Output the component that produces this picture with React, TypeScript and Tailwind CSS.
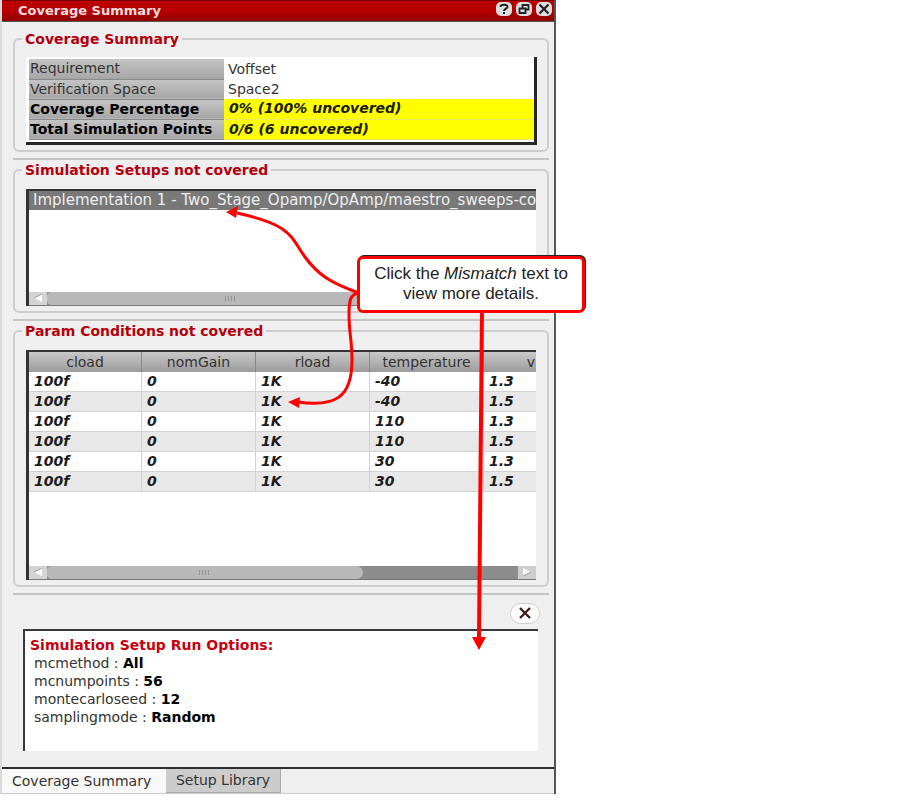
import type { ReactNode } from "react";

const summary = [
  { label: "Requirement", value: "Voffset", strong: false },
  { label: "Verification Space", value: "Space2", strong: false },
  { label: "Coverage Percentage", value: "0% (100% uncovered)", strong: true },
  { label: "Total Simulation Points", value: "0/6 (6 uncovered)", strong: true },
];

const columns = ["cload", "nomGain", "rload", "temperature", "v"];

const conditions = [
  ["100f", "0", "1K", "-40", "1.3"],
  ["100f", "0", "1K", "-40", "1.5"],
  ["100f", "0", "1K", "110", "1.3"],
  ["100f", "0", "1K", "110", "1.5"],
  ["100f", "0", "1K", "30", "1.3"],
  ["100f", "0", "1K", "30", "1.5"],
];

const runOptions = [
  ["mcmethod", "All"],
  ["mcnumpoints", "56"],
  ["montecarloseed", "12"],
  ["samplingmode", "Random"],
];

function Group({ title, children }: { title: string; children: ReactNode }) {
  return (
    <>
      <fieldset className="mr-[5px] ml-[11px] min-w-0 rounded-md border-2 border-[#cdcdcd] pr-[10px] pb-[5px] pl-[11px]">
        <legend className="-ml-[4px] h-4 px-[3px] text-[14px] leading-4 font-bold text-[#b3000c]">{title}</legend>
        {children}
      </fieldset>
      <hr className="mt-[6px] mr-[5px] mb-[2px] ml-[11px] border-t-2 border-[#c4c4c4]" />
    </>
  );
}

function Scrollbar({ thumb }: { thumb: string }) {
  return (
    <div className="flex h-[14px] border-b border-[#777] bg-[#8c8c8c]">
      <button aria-label="Scroll left" className="flex w-[18px] items-center justify-center bg-[#d4d4d4]">
        <svg width="8" height="8" viewBox="0 0 8 8"><path d="M8 0v8L0 4z" fill="#fff" /><path d="M8 0L0 4" stroke="#999" /></svg>
      </button>
      <div className="min-w-0 flex-1">
        <div className={`flex h-full items-center justify-center gap-px rounded-l-[5px] rounded-r-[7px] bg-[#b8b8b8] ${thumb}`}>
          {[0, 1, 2, 3].map((n) => <span key={n} className="mr-px h-[5px] w-px bg-[#929292]" />)}
        </div>
      </div>
      <button aria-label="Scroll right" className="flex w-[18px] items-center justify-center bg-[#cecece]">
        <svg width="8" height="8" viewBox="0 0 8 8"><path d="M0 0v8L8 4z" fill="#fff" /><path d="M0 8L8 4" stroke="#999" /></svg>
      </button>
    </div>
  );
}

function TitleButton({ label, children }: { label: string; children: ReactNode }) {
  return (
    <button aria-label={label} className="flex h-[14px] w-4 items-center justify-center rounded-[5px] bg-[#dedede]">
      <svg width="14" height="12" viewBox="0 0 14 12" fill="none" stroke="#222" strokeWidth="2">{children}</svg>
    </button>
  );
}

export default function App() {
  return (
    <div className="relative grid grid-cols-[556fr_354fr] bg-white font-['DejaVu_Sans','Open_Sans',sans-serif] text-[14px] text-[#333]">
      <main className="min-w-0 border-r-2 border-l-2 border-r-[#555] border-l-[#dadada] bg-[#efefef]">
        <header className="mb-[9px] flex h-[22px] items-start justify-between border-t border-b border-t-[#7a0000] border-b-[#555] bg-linear-to-b from-[#b80000] from-50% to-[#8e0000] pr-[2px] pl-4">
          <h1 className="text-[13px] leading-[19px] font-bold text-[#f5dede]">Coverage Summary</h1>
          <div className="flex gap-1 pt-px">
            <TitleButton label="Help"><path d="M3.500 4C3.500 1 10.500 1 10.500 3.800C10.500 6 7 5.500 7 8M7 9v2" /></TitleButton>
            <TitleButton label="Restore"><path d="M5.500 4.500V2h6v4.500H9M2.500 5.500h6V10h-6z" strokeWidth="1.800" /></TitleButton>
            <TitleButton label="Close"><path d="M2.500 1.500l9 9M11.500 1.500l-9 9" strokeWidth="2.200" /></TitleButton>
          </div>
        </header>

        <Group title="Coverage Summary">
          <div className="mt-[10px] border-r-[3px] border-b-[3px] border-[#26262a] bg-white pt-[2px] pb-[2px] pl-[3px]">
            <table className="w-full table-fixed border-collapse text-left">
              <colgroup><col className="w-[195px]" /><col /></colgroup>
              <tbody>
                {summary.map((row) => (
                  <tr key={row.label} className="h-5">
                    <th scope="row" className={`h-5 border-b border-[#888] bg-linear-to-b from-[#c4c4c4] to-[#a6a6a6] p-0 pl-px leading-[19px] whitespace-nowrap ${row.strong ? "font-bold text-black" : "font-normal"}`}>{row.label}</th>
                    <td className={`h-5 p-0 leading-[19px] ${row.strong ? "border-b border-[#e9e96a] bg-[#ff0] pl-[5px] font-bold text-[#1c1c00] italic" : "pl-1"}`}>{row.value}</td>
                  </tr>
                ))}
              </tbody>
            </table>
          </div>
        </Group>

        <Group title="Simulation Setups not covered">
          <div className="mt-[11px] mr-px flex h-[117px] flex-col justify-between border-t-2 border-l-[3px] border-[#333] bg-white">
            <button className="h-[19px] w-full overflow-hidden bg-[#787878] pl-1 text-left text-[15px] leading-[18px] whitespace-nowrap text-[#eee]">
              Implementation 1 - Two_Stage_Opamp/OpAmp/maestro_sweeps-co
            </button>
            <Scrollbar thumb="w-[78%]" />
          </div>
        </Group>

        <Group title="Param Conditions not covered">
          <div className="mt-[11px] mr-px flex h-[230px] flex-col justify-between border-t-2 border-l-[3px] border-[#333] bg-white">
            <table className="w-full table-fixed border-separate border-spacing-0 text-left">
              <colgroup>
                <col className="w-[113px]" /><col className="w-[114px]" /><col className="w-[114px]" /><col className="w-[114px]" /><col />
              </colgroup>
              <thead>
                <tr>
                  {columns.map((name) => (
                    <th key={name} scope="col" className="h-5 border-r border-[#888] bg-linear-to-b from-[#c8c8c8] to-[#9c9c9c] p-0 text-center leading-5 font-normal last:border-r-0 last:pr-px last:text-right">{name}</th>
                  ))}
                </tr>
              </thead>
              <tbody>
                {conditions.map((row, index) => (
                  <tr key={index} className="even:bg-[#e8e8e8]">
                    {row.map((cell, i) => (
                      <td key={i} className="h-5 border-r border-b border-[#d2d2d2] p-0 pl-[5px] leading-[19px] font-bold text-[#1c1c1c] italic last:border-r-0">{cell}</td>
                    ))}
                  </tr>
                ))}
              </tbody>
            </table>
            <Scrollbar thumb="w-[67%]" />
          </div>
        </Group>

        <section className="mt-[8px] pr-4 pl-[21px]">
          <div className="flex h-[26px] justify-end">
            <button aria-label="Close details" className="-mr-[2px] flex h-[21px] w-[30px] items-center justify-center rounded-full border border-[#ccc] bg-white">
              <svg width="12" height="12" viewBox="0 0 12 12" fill="none" stroke="#3a1a14" strokeWidth="2.300"><path d="M1 1l10 10M11 1L1 11" /></svg>
            </button>
          </div>
          <div className="mb-4 h-[122px] border-t-2 border-l-2 border-[#3a3a3e] bg-white pt-[5px] pl-[5px] leading-[18px]">
            <h2 className="font-bold text-[#c8000c]">Simulation Setup Run Options:</h2>
            <ul className="pl-[4px]">
              {runOptions.map(([name, value]) => (
                <li key={name}>{name} : <b className="text-black">{value}</b></li>
              ))}
            </ul>
          </div>
        </section>

        <nav role="tablist" className="flex border-t-2 border-b border-t-[#2c2c30] border-b-[#ccc]">
          <button role="tab" aria-selected="true" className="h-[24px] w-[164px] bg-[#f8f8f8] pl-[10px] text-left leading-5">Coverage Summary</button>
          <button role="tab" aria-selected="false" className="h-[24px] w-[115px] border-r border-b border-[#aaa] bg-[#ccc] leading-5">Setup Library</button>
        </nav>
      </main>

      <svg className="pointer-events-none absolute top-0 left-0" width="600" height="670" viewBox="0 0 600 670" fill="none" stroke="#f00">
        <path d="M359 293C331 283 318 275 305 257C290 236 292 225 237 213" strokeWidth="3" />
        <path d="M359 293C350 294 349 301 349 315C349 332 352 341 352 360C352 398 335 407 298 402" strokeWidth="3" />
        <path d="M482 310L479 638" strokeWidth="4" />
        <path d="M226 212L238 206L236 218zM288 402L300 397L299 408zM472 637H486L479 650z" fill="#f00" stroke="none" />
      </svg>
      <aside className="absolute top-[256px] left-[357px] w-[228px] rounded-md border-[3px] border-[#f00] bg-white px-1 pt-[5px] pb-[6px] text-center font-['Liberation_Sans',Arial,sans-serif] text-[17px] leading-5 text-[#222] shadow-[1px_-1px_0_#222]">
        Click the <em>Mismatch</em> text to view more details.
      </aside>
    </div>
  );
}
